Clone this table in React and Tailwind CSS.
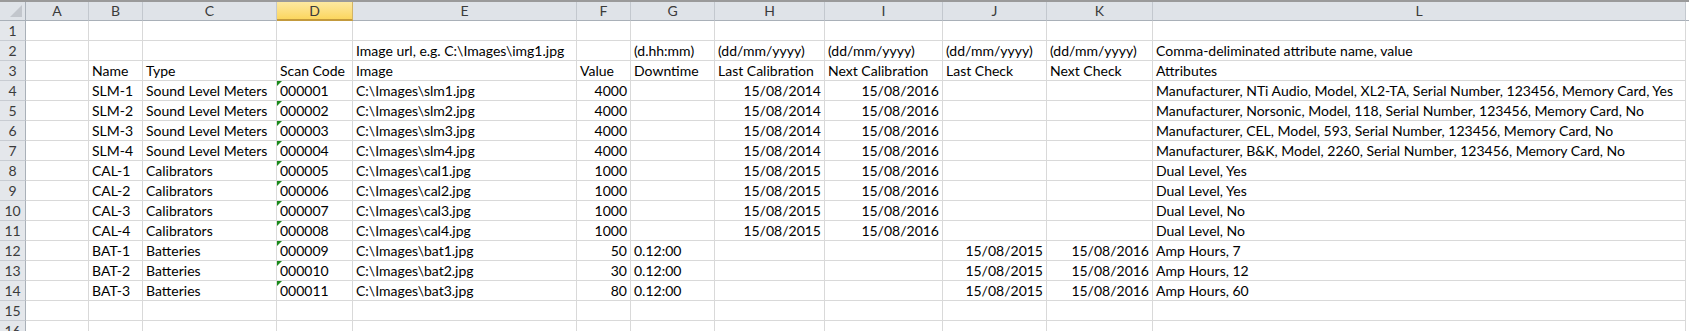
import React from 'react';

const cols = [
    { key: 'A', w: 63 },
    { key: 'B', w: 54 },
    { key: 'C', w: 134 },
    { key: 'D', w: 76 },
    { key: 'E', w: 224 },
    { key: 'F', w: 54 },
    { key: 'G', w: 84 },
    { key: 'H', w: 110 },
    { key: 'I', w: 118 },
    { key: 'J', w: 104 },
    { key: 'K', w: 106 },
    { key: 'L', w: 533 },
];

const rightCols = ['F', 'H', 'I', 'J', 'K'];

const data = {
    2: { E: 'Image url, e.g. C:\\Images\\img1.jpg', G: '(d.hh:mm)', H: '(dd/mm/yyyy)', I: '(dd/mm/yyyy)', J: '(dd/mm/yyyy)', K: '(dd/mm/yyyy)', L: 'Comma-deliminated attribute name, value', left: true },
    3: { B: 'Name', C: 'Type', D: 'Scan Code', E: 'Image', F: 'Value', G: 'Downtime', H: 'Last Calibration', I: 'Next Calibration', J: 'Last Check', K: 'Next Check', L: 'Attributes', left: true },
    4: { B: 'SLM-1', C: 'Sound Level Meters', D: '000001', E: 'C:\\Images\\slm1.jpg', F: '4000', H: '15/08/2014', I: '15/08/2016', L: 'Manufacturer, NTi Audio, Model, XL2-TA, Serial Number, 123456, Memory Card, Yes' },
    5: { B: 'SLM-2', C: 'Sound Level Meters', D: '000002', E: 'C:\\Images\\slm2.jpg', F: '4000', H: '15/08/2014', I: '15/08/2016', L: 'Manufacturer, Norsonic, Model, 118, Serial Number, 123456, Memory Card, No' },
    6: { B: 'SLM-3', C: 'Sound Level Meters', D: '000003', E: 'C:\\Images\\slm3.jpg', F: '4000', H: '15/08/2014', I: '15/08/2016', L: 'Manufacturer, CEL, Model, 593, Serial Number, 123456, Memory Card, No' },
    7: { B: 'SLM-4', C: 'Sound Level Meters', D: '000004', E: 'C:\\Images\\slm4.jpg', F: '4000', H: '15/08/2014', I: '15/08/2016', L: 'Manufacturer, B&K, Model, 2260, Serial Number, 123456, Memory Card, No' },
    8: { B: 'CAL-1', C: 'Calibrators', D: '000005', E: 'C:\\Images\\cal1.jpg', F: '1000', H: '15/08/2015', I: '15/08/2016', L: 'Dual Level, Yes' },
    9: { B: 'CAL-2', C: 'Calibrators', D: '000006', E: 'C:\\Images\\cal2.jpg', F: '1000', H: '15/08/2015', I: '15/08/2016', L: 'Dual Level, Yes' },
    10: { B: 'CAL-3', C: 'Calibrators', D: '000007', E: 'C:\\Images\\cal3.jpg', F: '1000', H: '15/08/2015', I: '15/08/2016', L: 'Dual Level, No' },
    11: { B: 'CAL-4', C: 'Calibrators', D: '000008', E: 'C:\\Images\\cal4.jpg', F: '1000', H: '15/08/2015', I: '15/08/2016', L: 'Dual Level, No' },
    12: { B: 'BAT-1', C: 'Batteries', D: '000009', E: 'C:\\Images\\bat1.jpg', F: '50', G: '0.12:00', J: '15/08/2015', K: '15/08/2016', L: 'Amp Hours, 7' },
    13: { B: 'BAT-2', C: 'Batteries', D: '000010', E: 'C:\\Images\\bat2.jpg', F: '30', G: '0.12:00', J: '15/08/2015', K: '15/08/2016', L: 'Amp Hours, 12' },
    14: { B: 'BAT-3', C: 'Batteries', D: '000011', E: 'C:\\Images\\bat3.jpg', F: '80', G: '0.12:00', J: '15/08/2015', K: '15/08/2016', L: 'Amp Hours, 60' },
};

const rows = Array.from({ length: 16 }, (_, i) => i + 1);
const template = '26px ' + cols.map((c) => c.w + 'px').join(' ') + ' 1fr';

function Cell({ row, col }) {
    const r = data[row] || {};
    const value = r[col.key];
    const right = !r.left && rightCols.includes(col.key);
    const flagged = col.key === 'D' && value && !r.left;
    return (
        <div className={`relative h-5 border-r border-b border-[#d9d9d9] px-[3px] overflow-visible whitespace-nowrap leading-5 ${right ? 'text-right' : 'text-left'}`}>
            {flagged && (
                <span className="absolute left-0 top-0 w-0 h-0 border-t-[5px] border-r-[5px] border-t-[#1b8a1b] border-r-transparent" />
            )}
            {value}
        </div>
    );
}

export default function App() {
    return (
        <div
            className="w-[1689px] h-[331px] overflow-hidden bg-white text-black text-[14px]"
            style={{ fontFamily: 'Lato, "Open Sans", sans-serif' }}
        >
            <div className="grid border-t-2 border-[#9a9a9a]" style={{ gridTemplateColumns: template }}>
                <div className="relative h-[19px] bg-[#dfe3e8] border-r border-b border-[#a9b0b8]">
                    <span className="absolute right-[3px] bottom-[3px] w-0 h-0 border-b-[12px] border-l-[12px] border-b-[#c2c6cc] border-l-transparent" />
                </div>
                {cols.map((c) =>
                    c.key === 'D' ? (
                        <div key={c.key} className="h-[19px] leading-[17px] text-center text-[#3b3b3b] bg-gradient-to-b from-[#fde9a0] to-[#fbd65d] border-r border-b-2 border-r-[#d2b466] border-b-[#c39a3c]">
                            {c.key}
                        </div>
                    ) : (
                        <div key={c.key} className="h-[19px] leading-[18px] text-center text-[#3b3b3b] bg-[#dfe3e8] border-r border-b border-r-[#c3c8ce] border-b-[#a9b0b8]">
                            {c.key}
                        </div>
                    )
                )}
                <div className="h-[19px] bg-white border-b border-[#a9b0b8]" />
                {rows.map((row) => (
                    <React.Fragment key={row}>
                        <div className="h-5 leading-5 text-center text-[#3b3b3b] bg-[#e4e7eb] border-r border-b border-r-[#a9b0b8] border-b-[#c8ccd2]">
                            {row}
                        </div>
                        {cols.map((c) => (
                            <Cell key={c.key} row={row} col={c} />
                        ))}
                        <div className="h-5 bg-white" />
                    </React.Fragment>
                ))}
            </div>
        </div>
    );
}
